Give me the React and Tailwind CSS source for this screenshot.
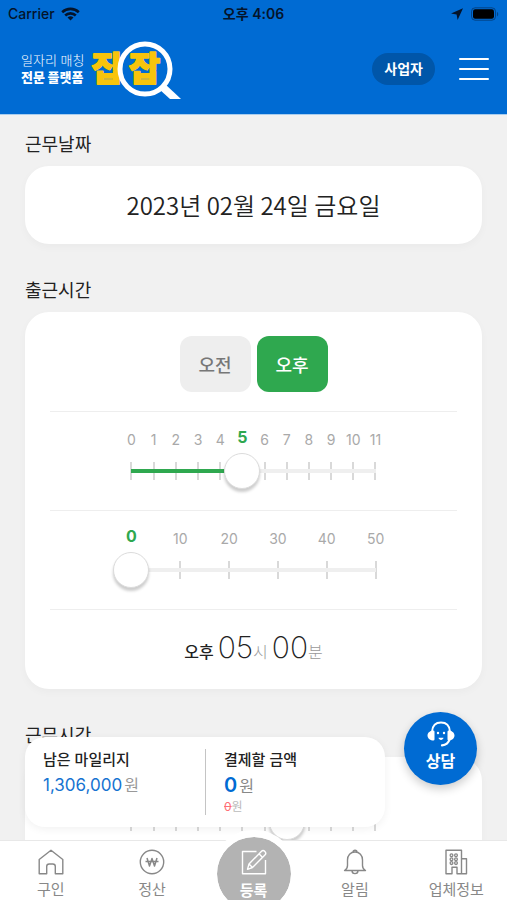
import { useState } from 'react';

function WifiIcon() {
  return (
    <svg className="h-[14px] w-[19px]" viewBox="0 0 19 14" fill="none" stroke="currentColor" strokeWidth="2.6" aria-hidden="true">
      <path d="M1.2 5.2a12 12 0 0 1 16.6 0" />
      <path d="M4.2 8.5a7.6 7.6 0 0 1 10.6 0" />
      <path d="M9.5 13.6 6.5 10.6a4.3 4.3 0 0 1 6 0z" fill="currentColor" stroke="none" />
    </svg>
  );
}

function StatusBar() {
  return (
    <div className="grid h-7 grid-cols-3 items-center px-2 text-sm font-medium text-[#04142b]">
      <div className="flex items-center gap-1.5">
        <span>Carrier</span>
        <WifiIcon />
      </div>
      <span className="text-center font-semibold">오후 4:06</span>
      <div className="flex items-center justify-end gap-2">
        <svg className="h-3 w-3" viewBox="0 0 12 12" fill="currentColor" aria-hidden="true">
          <path d="M12 .3 0 5.500l5.600 1 1 5.500z" />
        </svg>
        <svg className="h-[14px] w-7" viewBox="0 0 28 14" aria-hidden="true">
          <rect x=".5" y=".8" width="24" height="12.4" rx="3.6" fill="none" stroke="#04142b" strokeOpacity=".45" />
          <rect x="2" y="2.3" width="21" height="9.4" rx="2.2" fill="#000" />
          <path d="M26 5v4.4c1.6-.6 1.6-3.8 0-4.4z" fill="#04142b" fillOpacity=".45" />
        </svg>
      </div>
    </div>
  );
}

function Logo() {
  return (
    <a href="#home" className="flex items-center gap-1.5" aria-label="집잡">
      <span className="flex flex-col text-[13px] leading-[17px] text-white">
        <span className="whitespace-nowrap font-light">일자리 매칭</span>
        <span className="whitespace-nowrap font-black">전문 플랫폼</span>
      </span>
      <svg className="h-[62px] w-[94px]" viewBox="0 0 94 62" strokeLinejoin="round" aria-hidden="true">
        <text x="1" y="43" fontSize="34" fontWeight="900" fill="#f8c40c" stroke="#f8c40c" strokeWidth="1.5">집</text>
        <circle cx="55" cy="31" r="25" fill="#006bd3" stroke="#fff" strokeWidth="5" />
        <path d="M69 51 75 46 91 61H80z" fill="#fff" />
        <text x="39" y="43" fontSize="34" fontWeight="900" fill="#f8c40c" stroke="#f8c40c" strokeWidth="1.5">잡</text>
      </svg>
    </a>
  );
}

function Header() {
  return (
    <header className="shrink-0 border-b border-[#a9cdee] bg-[#006bd3]">
      <StatusBar />
      <div className="flex h-[86px] items-center justify-between pr-[18px] pb-1 pl-[21px]">
        <Logo />
        <div className="flex items-center gap-6">
          <button type="button" className="h-8 rounded-full bg-[#0056a9] px-3 text-sm font-bold text-white">
            사업자
          </button>
          <button type="button" aria-label="메뉴" className="flex w-[30px] flex-col gap-2">
            <span className="h-[2px] rounded-full bg-white" />
            <span className="h-[2px] rounded-full bg-white" />
            <span className="h-[2px] rounded-full bg-white" />
          </button>
        </div>
      </div>
    </header>
  );
}

function TickLabels({ marks, value }) {
  return (
    <div className="mx-auto mb-[3px] flex h-5 w-3/5 justify-between">
      {marks.map((mark, i) => (
        <span
          key={mark}
          className={
            i === value
              ? 'flex w-0 justify-center text-base leading-[14px] font-bold text-[#2fa84f]'
              : 'flex w-0 justify-center text-sm leading-5 text-[#a9a9a9]'
          }
        >
          {mark}
        </span>
      ))}
    </div>
  );
}

function TickSlider({ label, marks, value, onChange }) {
  const last = marks.length - 1;
  return (
    <div className="relative mx-auto flex h-9 w-3/5 items-center justify-between">
      {marks.map((mark) => (
        <span key={mark} className="flex w-0 justify-center">
          <span className="h-[18px] w-[2px] shrink-0 bg-[#d9d9d9]" />
        </span>
      ))}
      <div className="absolute inset-x-0 h-1 bg-[#efefef]">
        <div className="h-full bg-[#2fa84f]" style={{ width: `${(value / last) * 100}%` }} />
      </div>
      <input
        type="range"
        aria-label={label}
        min="0"
        max={last}
        value={value}
        onChange={(e) => onChange(Number(e.target.value))}
        className="absolute -inset-x-[18px] h-9 appearance-none bg-transparent [&::-webkit-slider-thumb]:h-9 [&::-webkit-slider-thumb]:w-9 [&::-webkit-slider-thumb]:appearance-none [&::-webkit-slider-thumb]:rounded-full [&::-webkit-slider-thumb]:border [&::-webkit-slider-thumb]:border-[#dcdcdc] [&::-webkit-slider-thumb]:bg-white [&::-webkit-slider-thumb]:shadow-[0_3px_3px_rgba(0,0,0,0.2)]"
      />
    </div>
  );
}

function Section({ title, children }) {
  return (
    <section className="mb-8">
      <h2 className="mb-2 pt-[2px] text-lg leading-[26px] font-normal text-[#222]">{title}</h2>
      <div className="rounded-3xl bg-white shadow-[0_3px_8px_rgba(0,0,0,0.03)]">{children}</div>
    </section>
  );
}

const hours = [0, 1, 2, 3, 4, 5, 6, 7, 8, 9, 10, 11];
const minutes = [0, 10, 20, 30, 40, 50];

function StartTime() {
  const [half, setHalf] = useState('오후');
  const [hour, setHour] = useState(5);
  const [minute, setMinute] = useState(0);
  return (
    <div className="px-[25px] pt-6">
      <div className="mb-[19px] flex justify-center gap-1.5">
        {['오전', '오후'].map((name) => (
          <button
            key={name}
            type="button"
            aria-pressed={half === name}
            onClick={() => setHalf(name)}
            className={
              half === name
                ? 'h-14 w-[71px] rounded-xl bg-[#2fa84f] pt-1 text-lg font-medium text-white'
                : 'h-14 w-[71px] rounded-xl bg-[#eee] pt-1 text-lg font-medium text-[#777]'
            }
          >
            {name}
          </button>
        ))}
      </div>
      <div className="border-t border-[#eee] pt-[18px] pb-[21px]">
        <TickLabels marks={hours} value={hour} />
        <TickSlider label="시" marks={hours} value={hour} onChange={setHour} />
      </div>
      <div className="border-t border-[#eee] pt-[18px] pb-[21px]">
        <TickLabels marks={minutes} value={minute} />
        <TickSlider label="분" marks={minutes} value={minute} onChange={setMinute} />
      </div>
      <p className="flex h-20 items-baseline justify-center border-t border-[#eee] pt-[17px] leading-10 text-[#222]">
        <span className="mr-1 text-base font-medium">{half}</span>
        <span className="text-[30px] font-extralight">{String(hour).padStart(2, '0')}</span>
        <span className="mr-1 text-base font-light text-[#999]">시</span>
        <span className="text-[30px] font-extralight">{String(minutes[minute]).padStart(2, '0')}</span>
        <span className="text-base font-light text-[#999]">분</span>
      </p>
    </div>
  );
}

function MileageBar() {
  return (
    <div className="absolute bottom-[13px] left-[25px] flex h-[90px] w-[71%] rounded-[20px] bg-white py-3 pl-[18px] shadow-[0_2px_8px_rgba(0,0,0,0.06)]">
      <div className="w-[163px] border-r border-[#c4c4c4]">
        <h3 className="pt-px text-[15px] leading-5 font-medium text-[#222]">남은 마일리지</h3>
        <p className="mt-px text-base leading-7 text-[#999]">
          <span className="mr-[2px] text-[17px] text-[#1673d1]">1,306,000</span>원
        </p>
      </div>
      <div className="pl-[18px]">
        <h3 className="pt-px text-[15px] leading-5 font-medium text-[#222]">결제할 금액</h3>
        <p className="mt-px text-base leading-7 text-[#888]">
          <span className="mr-[2px] text-xl font-semibold text-[#006bd3]">0</span>원
        </p>
        <p className="text-xs leading-[14px] text-[#bbb]">
          <s className="text-[#ff6f76]">0</s>원
        </p>
      </div>
    </div>
  );
}

function SupportButton() {
  return (
    <button
      type="button"
      className="absolute right-[30px] bottom-[55px] flex h-[73px] w-[73px] flex-col items-center rounded-full bg-[#006bd3] pt-2 text-base leading-6 font-bold text-white shadow-[0_4px_10px_rgba(0,0,0,0.2)]"
    >
      <svg className="h-[29px] w-[30px] shrink-0" viewBox="0 0 30 29" fill="none" stroke="#fff" strokeLinecap="round" aria-hidden="true">
        <path d="M6 11.5C6.500 5.500 10 2.500 15 2.500s8.500 3 9 9" strokeWidth="1.800" />
        <path d="M7.500 10.500c1 0 1 1 1 2v6c0 1 0 2-1 2C4.500 20.500 1.500 18.500 1.500 15.500s3-5 6-5zM22.500 10.500c-1 0-1 1-1 2v6c0 1 0 2 1 2 3 0 6-2 6-5s-3-5-6-5z" fill="#fff" stroke="none" />
        <path d="M23.500 19.500c-1 3.500-3.500 5.500-7.500 5.800" strokeWidth="2.200" />
        <circle cx="12" cy="13" r="1.200" fill="#fff" stroke="none" />
        <circle cx="18" cy="13" r="1.200" fill="#fff" stroke="none" />
        <path d="M12.500 17.800h5c-.5 2.800-4.500 2.800-5 0z" fill="#fff" stroke="none" />
      </svg>
      상담
    </button>
  );
}

const iconProps = {
  className: 'h-[26px] w-[26px]',
  viewBox: '0 0 26 26',
  fill: 'none',
  stroke: 'currentColor',
  strokeWidth: 1.4,
  strokeLinejoin: 'round',
  'aria-hidden': true,
};

function HomeIcon() {
  return (
    <svg {...iconProps}>
      <path d="M1.200 10.500 13 1.200l11.800 9.300v14.300h-7.500v-7.300a2.500 2.500 0 0 0-2.500-2.500h-3.600a2.500 2.500 0 0 0-2.500 2.500v7.300H1.200z" />
    </svg>
  );
}

function WonIcon() {
  return (
    <svg {...iconProps}>
      <circle cx="13" cy="13" r="11.700" />
      <path d="m8 9 2.500 8L13 9.500l2.500 7.500L18 9M6.500 12.500h13" strokeWidth="1.500" />
    </svg>
  );
}

function EditIcon() {
  return (
    <svg {...iconProps}>
      <path d="M15.500 2.500H1.500v22.300H24.500V11" />
      <path d="m8 15 12.300-12.600a2.500 2.500 0 0 1 3.600 3.600L11.500 18.500l-5 1.800zM18 4.800l3.600 3.600M8 15l3.500 3.500" />
    </svg>
  );
}

function BellIcon() {
  return (
    <svg {...iconProps}>
      <path d="M11 3.200a2 2 0 0 1 4 0M2.500 21.500h21c-2.500-1.300-3-2.500-3-5V11c0-4.800-3-8-7.500-8s-7.500 3.200-7.500 8v5.500c0 2.500-.5 3.700-3 5zM10 21.500c0 4.200 6 4.200 6 0" />
    </svg>
  );
}

function BuildingIcon() {
  return (
    <svg {...iconProps}>
      <path d="M3 24.800V1.200h15.500v23.600h-4.500v-6.500h-5v6.500H3zM18.500 9.800h5v15h-5" />
      <g strokeWidth="1.300">
        <circle cx="8.500" cy="6.300" r="1.400" />
        <circle cx="13" cy="6.300" r="1.400" />
        <circle cx="8.500" cy="10.200" r="1.400" />
        <circle cx="13" cy="10.200" r="1.400" />
        <circle cx="8.500" cy="14.100" r="1.400" />
        <circle cx="13" cy="14.100" r="1.400" />
      </g>
    </svg>
  );
}

function NavItem({ href, label, children }) {
  return (
    <a href={href} className="flex flex-1 flex-col items-center gap-[5px] pt-2 text-[15px] leading-5 text-[#888]">
      {children}
      <span className="whitespace-nowrap">{label}</span>
    </a>
  );
}

function BottomNav() {
  return (
    <nav className="relative flex h-[60px] shrink-0 border-t border-[#e8e8e8] bg-white">
      <NavItem href="#jobs" label="구인"><HomeIcon /></NavItem>
      <NavItem href="#settle" label="정산"><WonIcon /></NavItem>
      <div className="flex flex-1 justify-center">
        <a
          href="#register"
          className="absolute -top-[11px] flex h-[88px] w-[88px] flex-col items-center gap-1.5 rounded-full border-[7px] border-white bg-[#b3b3b3] bg-clip-padding pt-3 text-[15px] leading-5 font-bold text-white"
        >
          <EditIcon />
          등록
        </a>
      </div>
      <NavItem href="#alerts" label="알림"><BellIcon /></NavItem>
      <NavItem href="#company" label="업체정보"><BuildingIcon /></NavItem>
    </nav>
  );
}

export default function App() {
  const [duration, setDuration] = useState(7);
  return (
    <div className="flex h-screen flex-col overflow-hidden bg-[#f1f1f1] font-['Inter','Noto_Sans_CJK_KR',sans-serif]">
      <Header />
      <div className="relative min-h-0 flex-1">
        <main className="h-full overflow-y-auto px-[25px] pt-[15px] [scrollbar-width:none]">
          <Section title="근무날짜">
            <button type="button" className="h-[78px] w-full font-['Noto_Sans_CJK_KR',sans-serif] text-2xl font-[350] text-[#222]">
              2023년 02월 24일 금요일
            </button>
          </Section>
          <Section title="출근시간">
            <StartTime />
          </Section>
          <Section title="근무시간">
            <div className="px-[25px] pt-[47px] pb-6">
              <TickSlider label="근무시간" marks={hours} value={duration} onChange={setDuration} />
            </div>
          </Section>
        </main>
        <MileageBar />
        <SupportButton />
      </div>
      <BottomNav />
    </div>
  );
}
